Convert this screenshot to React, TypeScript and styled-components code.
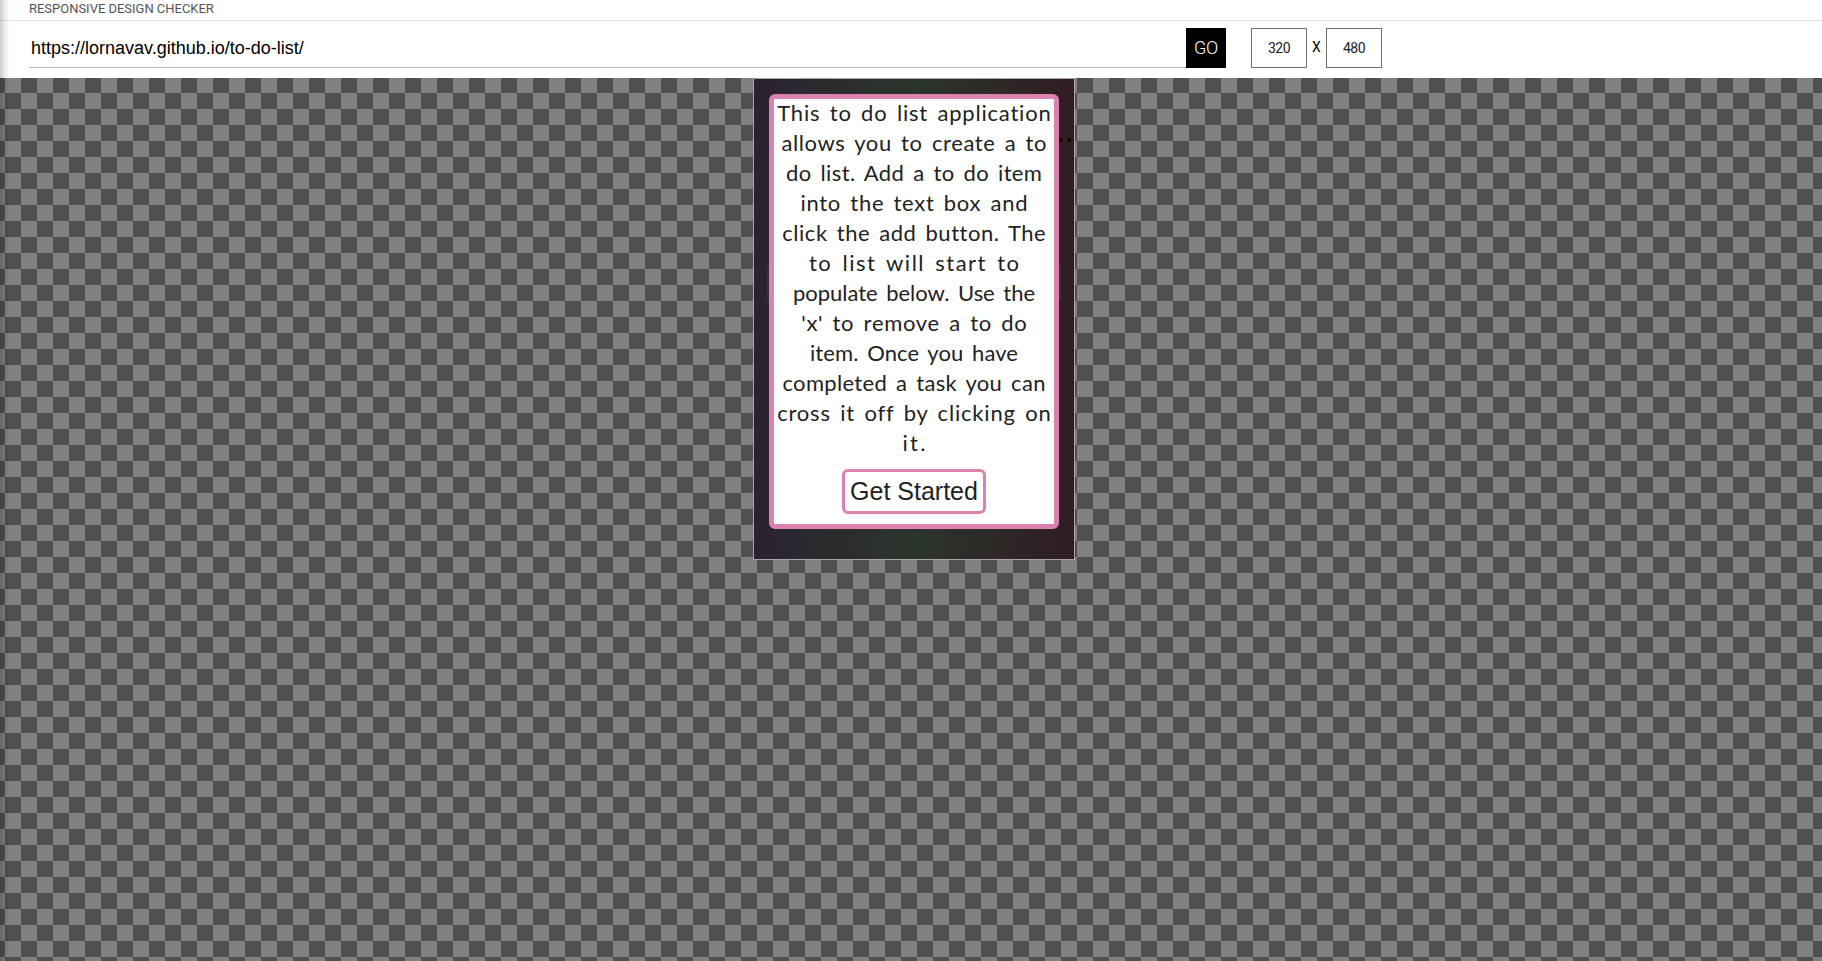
import React from "react";
import styled, { createGlobalStyle } from "styled-components";

const pink = "#dc82b0";

const GlobalStyle = createGlobalStyle`
  * { box-sizing: border-box; }
  body { margin: 0; overflow: hidden; background: #fff; font-family: Roboto, sans-serif; }
`;

const Page = styled.div`
  position: relative;
  display: flex;
  flex-direction: column;
  height: 961px;
`;

const EdgeShadow = styled.div`
  position: absolute;
  inset: 0 auto 0 0;
  width: 10px;
  background: linear-gradient(to right, rgba(0, 0, 0, 0.2), rgba(0, 0, 0, 0.07) 50%, transparent);
`;

const Title = styled.header`
  height: 21px;
  padding: 1px 0 0 29px;
  border-bottom: 1px solid #e0e0e0;
  font-size: 13px;
  line-height: 16px;
  letter-spacing: -0.02px;
  color: #555;
`;

const Toolbar = styled.div`
  display: flex;
  align-items: flex-start;
  height: 57px;
  padding: 7px 0 0 29px;
`;

const UrlField = styled.div`
  width: 1157px;
  height: 40px;
  padding-left: 2px;
  border-bottom: 1px solid #b4b4b4;
  font: 18px/41px "Liberation Sans", Arial, sans-serif;
  color: #000;
`;

const GoButton = styled.button`
  width: 40px;
  height: 40px;
  margin-right: 25px;
  padding: 0 0 2px;
  border: 0;
  background: #000;
  color: #fff;
  font: 300 18px Roboto, sans-serif;
  letter-spacing: -0.3px;
`;

const SizeField = styled.div`
  width: 56px;
  height: 40px;
  border: 1px solid #707070;
  font-size: 14px;
  line-height: 39px;
  letter-spacing: -0.6px;
  text-align: center;
  color: #222;
`;

const Times = styled.span`
  width: 19px;
  font-size: 14px;
  line-height: 39px;
  text-align: center;
`;

const Stage = styled.main`
  flex: 1;
  display: flex;
  justify-content: center;
  align-items: flex-start;
  padding-left: 6px;
  background: repeating-conic-gradient(#505050 0 25%, #808080 0 50%) 5px -1px / 32px 32px;
`;

const Device = styled.section`
  position: relative;
  width: 322px;
  height: 482px;
  padding: 15px;
  border: 1px solid #aaa4aa;
  background: linear-gradient(to right, #2b2230, #2b352b 50%, #301c22);
`;

const HiddenField = styled.div`
  position: absolute;
  left: 13px;
  top: 185px;
  width: 294px;
  height: 38px;
  border: 2px solid rgba(70, 70, 80, 0.4);
  border-radius: 4px;
`;

const Dots = styled.div`
  position: absolute;
  left: 305px;
  top: 59px;
  display: flex;
  gap: 4px;
`;

const Dot = styled.i`
  width: 4px;
  height: 4px;
  border-radius: 50%;
  background: #0a0507;
`;

const Card = styled.article`
  position: relative;
  display: flex;
  flex-direction: column;
  align-items: center;
  height: 435px;
  border: 5px solid ${pink};
  border-radius: 6px;
  background: #fff;
  color: #222;
`;

const Message = styled.p`
  margin: -1px 0 0;
  font: 22px/30px Lato, sans-serif;
  word-spacing: 3px;
  text-align: center;
  white-space: nowrap;
`;

const Line = styled.span<{ $tracking: number }>`
  display: block;
  letter-spacing: ${(p) => p.$tracking}px;
  margin-right: ${(p) => -p.$tracking}px;
`;

const StartButton = styled.button`
  width: 144px;
  height: 45px;
  margin-top: 11px;
  padding: 0;
  border: 3px solid ${pink};
  border-radius: 6px;
  background: #fff;
  color: #222;
  font: 25px "Liberation Sans", Arial, sans-serif;
  white-space: nowrap;
`;

const message: [string, number][] = [
  ["This to do list application", 0.8],
  ["allows you to create a to", 0.62],
  ["do list. Add a to do item", 0.37],
  ["into the text box and", 0.7],
  ["click the add button. The", 0.52],
  ["to list will start to", 1.51],
  ["populate below. Use the", -0.03],
  ["'x' to remove a to do", 0.7],
  ["item. Once you have", 0.09],
  ["completed a task you can", 0.32],
  ["cross it off by clicking on", 0.82],
  ["it.", 2.3],
];

export default function App() {
  return (
    <Page>
      <GlobalStyle />
      <Title>RESPONSIVE DESIGN CHECKER</Title>
      <Toolbar>
        <UrlField>https://lornavav.github.io/to-do-list/</UrlField>
        <GoButton>GO</GoButton>
        <SizeField>320</SizeField>
        <Times>X</Times>
        <SizeField>480</SizeField>
      </Toolbar>
      <Stage>
        <Device>
          <HiddenField />
          <Dots>
            <Dot />
            <Dot />
          </Dots>
          <Card>
            <Message>
              {message.map(([text, tracking]) => (
                <Line key={text} $tracking={tracking}>
                  {text}{" "}
                </Line>
              ))}
            </Message>
            <StartButton>Get Started</StartButton>
          </Card>
        </Device>
      </Stage>
      <EdgeShadow />
    </Page>
  );
}
